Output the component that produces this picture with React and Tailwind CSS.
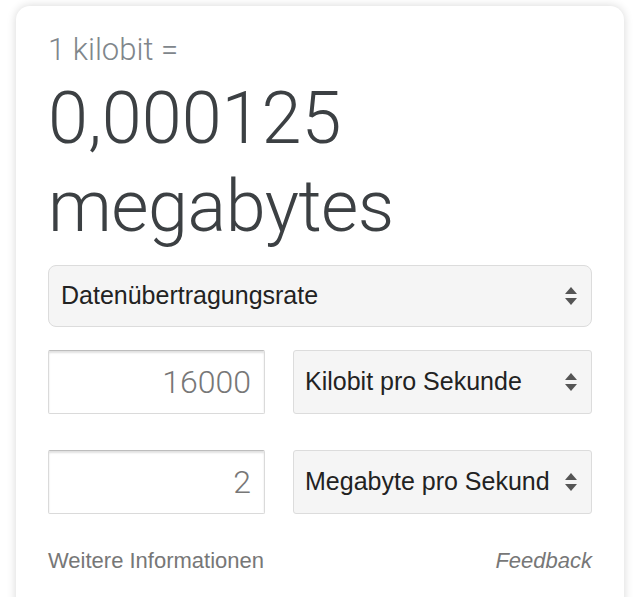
import React from 'react';

const sans = { fontFamily: '"Liberation Sans", Arial, sans-serif' };

// kleine Doppelpfeile wie beim nativen iOS-Select
const Arrows = () => (
  <svg width="14" height="20" viewBox="0 0 14 20" className="shrink-0">
    <path d="M7 1 L13 8 L1 8 Z" fill="#555555" />
    <path d="M7 19 L13 12 L1 12 Z" fill="#555555" />
  </svg>
);

const UnitRow = ({ value, unit, className = '' }) => (
  <div className={`flex items-stretch gap-[28px] ${className}`}>
    <div className="w-[217px] h-[64px] flex items-center justify-end pr-[13px] bg-white border border-[#dadada] border-t-[#bdbdbd] rounded-[2px] shadow-[inset_0_2px_2px_rgba(0,0,0,0.12)]">
      <span className="font-['Roboto',sans-serif] font-light text-[32px] text-[#777777]">{value}</span>
    </div>
    <div className="flex-1 min-w-0 h-[64px] flex items-center pl-[11px] pr-[13px] bg-[#f5f5f5] border border-[#dcdcdc] rounded-[3px]">
      <span className="flex-1 min-w-0 mr-[4px] text-[25px] text-[#222222] whitespace-nowrap">{unit}</span>
      <Arrows />
    </div>
  </div>
);

export default function App() {
  return (
    <div className="w-[640px] h-[597px] overflow-hidden bg-white pt-[6px] px-[16px]" style={sans}>
      <div className="bg-white rounded-[14px] shadow-[0_0_10px_rgba(0,0,0,0.16)] px-[32px] pt-[26px] pb-[40px]">
        <div className="font-['Roboto',sans-serif] font-light text-[31px] leading-[36px] text-[#80868b]">
          1 kilobit =
        </div>
        <div className="mt-[7px] font-['Roboto',sans-serif] font-light text-[72px] leading-[88px] text-[#3c4043]">
          <div>0,000125</div>
          <div className="tracking-[-0.5px]">megabytes</div>
        </div>

        <div className="mt-[14px] h-[62px] flex items-center justify-between pl-[12px] pr-[13px] bg-[#f5f5f5] border border-[#dcdcdc] rounded-[8px]">
          <span className="text-[25px] text-[#222222]">Datenübertragungsrate</span>
          <Arrows />
        </div>

        <UnitRow className="mt-[23px]" value="16000" unit="Kilobit pro Sekunde" />
        <UnitRow className="mt-[36px]" value="2" unit="Megabyte pro Sekund" />

        <div className="mt-[30px] flex justify-between text-[22px] text-[#777777]">
          <span>Weitere Informationen</span>
          <span className="italic">Feedback</span>
        </div>
      </div>
    </div>
  );
}
